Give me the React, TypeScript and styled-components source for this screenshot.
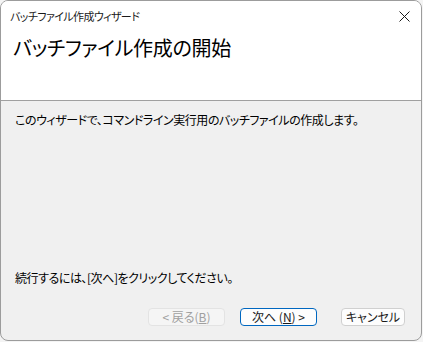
import React from "react";
import styled, { createGlobalStyle } from "styled-components";

const Global = createGlobalStyle`
  html, body { margin: 0; padding: 0; background: #f4f4f4; }
  body { font-family: "Noto Sans CJK JP", "Noto Sans", sans-serif; }
  * { box-sizing: border-box; }
`;

const Window = styled.div`
  width: 422px;
  height: 341px;
  border: 1px solid #9c9c9c;
  border-radius: 8px;
  overflow: hidden;
  display: flex;
  flex-direction: column;
  background: #f0f0f0;
  font-feature-settings: "palt";
  color: #000;
`;

const TitleBar = styled.div`
  height: 30px;
  background: #fff;
  display: flex;
  align-items: center;
  justify-content: space-between;
  padding: 0 9px 0 9px;
`;

const Title = styled.span`
  font-size: 11px;
  line-height: 16px;
  letter-spacing: -0.6px;
  color: #1a1a1a;
`;

const Close = styled.div`
  width: 14px;
  height: 14px;
  display: flex;
  align-items: center;
  justify-content: center;
  margin-right: 1px;
`;

const Header = styled.div`
  height: 70px;
  background: #fff;
  border-bottom: 1px solid #a0a0a0;
  padding: 4px 12px 0;
`;

const Heading = styled.h1`
  margin: 0;
  font-size: 20px;
  font-weight: 400;
  line-height: 26px;
  letter-spacing: -0.3px;
`;

const Body = styled.div`
  flex: 1;
  display: flex;
  flex-direction: column;
  padding: 11px 16px 14px 14px;
`;

const Text = styled.p`
  margin: 0;
  font-size: 12px;
  line-height: 16px;
  letter-spacing: -0.45px;
`;

const Spacer = styled.div`
  flex: 1;
`;

const Buttons = styled.div`
  display: flex;
  justify-content: flex-end;
  margin-top: 22px;
`;

const Button = styled.button<{ $primary?: boolean; $gap?: number }>`
  height: 18px;
  width: 77px;
  margin-left: ${(p) => p.$gap ?? 0}px;
  padding: 0;
  font-family: inherit;
  font-feature-settings: "palt";
  font-size: 12px;
  line-height: 16px;
  color: #1a1a1a;
  background: #fdfdfd;
  border: 1px solid ${(p) => (p.$primary ? "#0067c0" : "#d0d0d0")};
  border-radius: 4px;
  display: flex;
  align-items: center;
  justify-content: center;
  &:disabled {
    color: #a0a0a0;
    background: #f5f5f5;
    border-color: #e3e3e3;
  }
`;

const CancelButton = styled(Button)`
  width: 64px;
`;

const U = styled.span`
  text-decoration: underline;
  text-underline-offset: 1px;
`;

export default function App() {
  return (
    <>
      <Global />
      <Window>
        <TitleBar>
          <Title>バッチファイル作成ウィザード</Title>
          <Close>
            <svg width="11" height="11" viewBox="0 0 11 11">
              <path d="M0.5 0.5 L10.5 10.5 M10.5 0.5 L0.5 10.5" stroke="#1a1a1a" strokeWidth="1" fill="none" />
            </svg>
          </Close>
        </TitleBar>
        <Header>
          <Heading>バッチファイル作成の開始</Heading>
        </Header>
        <Body>
          <Text>このウィザードで、コマンドライン実行用のバッチファイルの作成します。</Text>
          <Spacer />
          <Text>続行するには、[次へ]をクリックしてください。</Text>
          <Buttons>
            <Button disabled>
              &lt; 戻る(<U>B</U>)
            </Button>
            <Button $primary $gap={15}>
              次へ (<U>N</U>) &gt;
            </Button>
            <CancelButton $gap={24}>キャンセル</CancelButton>
          </Buttons>
        </Body>
      </Window>
    </>
  );
}
